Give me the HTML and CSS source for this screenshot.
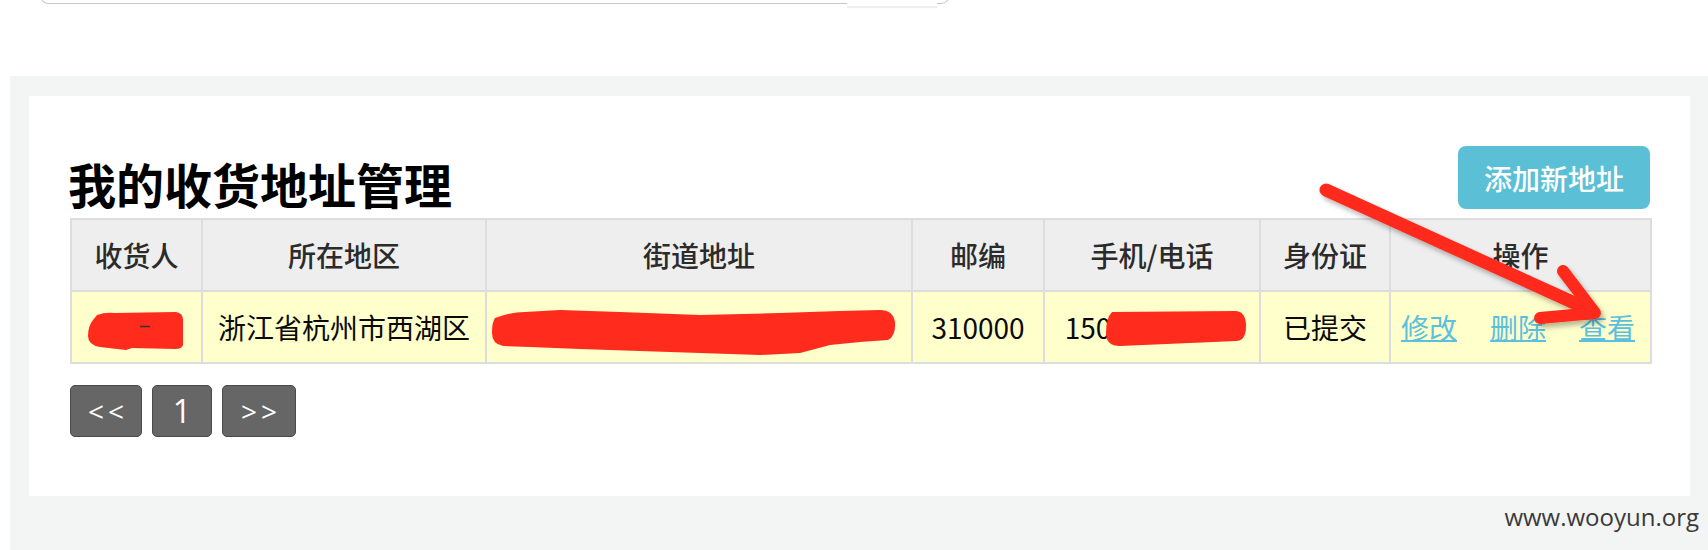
FILE: index.html
```html
<!DOCTYPE html>
<html lang="zh-CN">
<head>
<meta charset="utf-8">
<title>我的收货地址管理</title>
<link rel="stylesheet" href="styles.css">
</head>
<body>
<div class="topbar">
  <div class="search">
    <div class="search-input"></div>
    <div class="search-btn"></div>
    <div class="search-end"></div>
  </div>
</div>
<div class="main">
  <div class="card">
    <div class="card-head">
      <h1 class="title">我的收货地址管理</h1>
      <a class="btn-add">添加新地址</a>
    </div>
    <table class="addr">
      <colgroup>
        <col class="c-name"><col class="c-area"><col class="c-street"><col class="c-zip"><col class="c-phone"><col class="c-id"><col class="c-ops">
      </colgroup>
      <thead>
        <tr><th>收货人</th><th>所在地区</th><th>街道地址</th><th>邮编</th><th>手机/电话</th><th>身份证</th><th>操作</th></tr>
      </thead>
      <tbody>
        <tr>
          <td></td>
          <td>浙江省杭州市西湖区</td>
          <td></td>
          <td>310000</td>
          <td><span>150</span><span class="phone-mask"></span></td>
          <td>已提交</td>
          <td><div class="ops"><a class="op">修改</a><a class="op">删除</a><a class="op">查看</a></div></td>
        </tr>
      </tbody>
    </table>
    <div class="pager">
      <a class="pg pg-prev">&lt;&lt;</a>
      <a class="pg pg-num">1</a>
      <a class="pg pg-next">&gt;&gt;</a>
    </div>
  </div>
  <div class="footer">www.wooyun.org</div>
</div>
<svg class="marks" viewBox="0 0 1708 550" width="1708" height="550" xmlns="http://www.w3.org/2000/svg">
  <defs>
    <filter id="sh" x="-10%" y="-10%" width="130%" height="140%">
      <feDropShadow dx="3" dy="4" stdDeviation="2.5" flood-color="#000" flood-opacity="0.28"/>
    </filter>
  </defs>
  <g fill="#ff2b1c">
    <path d="M97 315 Q105 312 115 313 L176 312 Q183 313 183 320 L183 345 Q182 349 175 349 L132 348 L126 350 L100 347 Q88 345 88 336 Q88 326 93 320 Z"/>
    <path d="M495 318 Q510 312 525 312 L560 310 L620 312 L700 315 L780 313 L840 311 L880 310 Q893 310 895 322 Q896 336 888 340 L860 342 L830 345 L800 353 L760 355 L700 353 L640 351 L580 349 L530 347 L503 346 Q492 344 492 333 Q492 322 495 318 Z"/>
    <path d="M1112 312 L1236 311 Q1246 312 1246 326 Q1246 341 1236 341 L1120 346 Q1106 346 1106 333 Q1106 318 1112 312 Z"/>
  </g>
  <line x1="140" y1="326.5" x2="150" y2="326.5" stroke="#333" stroke-width="1.5"/>
  <g filter="url(#sh)" fill="none" stroke="#ff2b1c" stroke-linecap="round" stroke-linejoin="round">
    <line x1="1326" y1="190" x2="1592" y2="311" stroke-width="13"/>
    <polyline points="1563,271 1595,313 1540,318" stroke-width="12"/>
  </g>
</svg>
</body>
</html>
```

FILE: styles.css
```css
html, body {
  margin: 0;
  padding: 0;
}

body {
  position: relative;
  width: 1708px;
  height: 550px;
  overflow: hidden;
  background: #ffffff;
  font-family: "Noto Sans CJK SC", "Noto Sans", sans-serif;
}

.topbar {
  display: flow-root;
  height: 76px;
}

.search {
  display: flex;
  width: 909px;
  height: 40px;
  margin-top: -36px;
  margin-left: 41px;
}

.search-input {
  flex: 1;
  border: 1px solid #c6c6c6;
  border-right: none;
  border-radius: 0 0 0 7px;
}

.search-btn {
  width: 90px;
  height: 41px;
  background: #ffffff;
  border-top: 1px solid #d4f0f7;
  box-shadow: 0 2px 1px #efefef;
}

.search-end {
  width: 12px;
  border-right: 1px solid #c6c6c6;
  border-bottom: 1px solid #c6c6c6;
  border-radius: 0 0 9px 0;
}

.main {
  box-sizing: border-box;
  height: 474px;
  margin-left: 10px;
  padding: 20px 18px 0 19px;
  background: #f3f4f4;
}

.card {
  box-sizing: border-box;
  height: 400px;
  padding: 50px 40px 0 41px;
  background: #ffffff;
}

.card-head {
  display: flex;
  justify-content: space-between;
  align-items: flex-end;
  height: 63px;
  margin-bottom: 9px;
}

.title {
  margin: 0 0 2px -2px;
  font-size: 48px;
  line-height: 48px;
  font-weight: 700;
  color: #000000;
}

.btn-add {
  display: flex;
  align-items: center;
  justify-content: center;
  width: 192px;
  height: 63px;
  border-radius: 8px;
  background: #5bc0d5;
  color: #ffffff;
  font-size: 28px;
  font-weight: 500;
}

.addr {
  width: 1580px;
  border-collapse: collapse;
  table-layout: fixed;
  font-size: 28px;
}

.c-name { width: 131px; }
.c-area { width: 284px; }
.c-street { width: 426px; }
.c-zip { width: 132px; }
.c-phone { width: 216px; }
.c-id { width: 130px; }
.c-ops { width: 261px; }

.addr th,
.addr td {
  height: 70px;
  padding: 0;
  border: 2px solid #dddddd;
  text-align: center;
  vertical-align: middle;
  white-space: nowrap;
}

.addr th {
  background: #eeeeee;
  color: #2b2b2b;
  font-weight: 500;
}

.addr td {
  background: #ffffcc;
  color: #0a0a0a;
}

.phone-mask {
  display: inline-block;
  width: 128px;
}

.ops {
  display: flex;
  gap: 33px;
  padding-left: 10px;
}

.op {
  color: #5bc0de;
  text-decoration: underline;
  text-decoration-thickness: 2px;
}

.pager {
  display: flex;
  gap: 10px;
  margin-top: 21px;
}

.pg {
  display: flex;
  align-items: center;
  justify-content: center;
  box-sizing: border-box;
  height: 52px;
  border: 1px solid #4a4a4a;
  border-radius: 5px;
  background: #666666;
  color: #ffffff;
  font-family: "Open Sans", "DejaVu Sans", sans-serif;
  font-size: 30px;
  line-height: 1;
}

.pg-prev,
.pg-next {
  font-size: 28px;
  letter-spacing: 4px;
  text-indent: 4px;
}

.pg-prev { width: 72px; }
.pg-num { width: 60px; font-size: 32px; }
.pg-next { width: 74px; }

.footer {
  margin-top: 6px;
  margin-right: -9px;
  text-align: right;
  font-family: "Open Sans", "DejaVu Sans", sans-serif;
  font-size: 24px;
  line-height: 30px;
  color: #3a3a3a;
}

.marks {
  position: absolute;
  left: 0;
  top: 0;
  pointer-events: none;
}
```
